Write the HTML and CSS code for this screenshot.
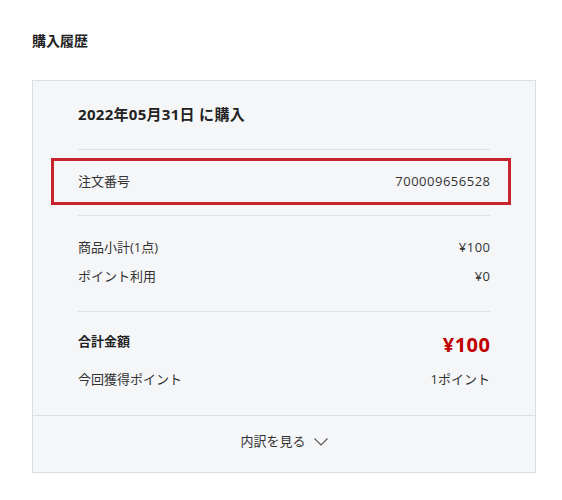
FILE: index.html
```html
<!DOCTYPE html>
<html lang="ja">
<head>
<meta charset="utf-8">
<link rel="stylesheet" href="styles.css">
</head>
<body>
<div class="page">
  <h1 class="title">購入履歴</h1>
  <div class="card">
    <div class="card-body">
      <div class="date">2022年05月31日 に購入</div>
      <div class="divider"></div>
      <div class="row order">
        <span>注文番号</span>
        <span class="val">700009656528</span>
      </div>
      <div class="divider divider-2"></div>
      <div class="rows">
        <div class="row line"><span>商品小計(1点)</span><span class="val">¥100</span></div>
        <div class="row line"><span>ポイント利用</span><span class="val">¥0</span></div>
      </div>
      <div class="divider"></div>
      <div class="totals">
        <div class="row total">
          <span class="total-label">合計金額</span>
          <span class="total-amount">¥100</span>
        </div>
        <div class="row points"><span>今回獲得ポイント</span><span>1ポイント</span></div>
      </div>
    </div>
    <div class="card-footer">
      <span>内訳を見る</span>
      <svg class="chev" width="14" height="8" viewBox="0 0 14 8"><path d="M0.5 0.5 L7 7 L13.5 0.5" fill="none" stroke="#555" stroke-width="1.1"/></svg>
    </div>
  </div>
</div>
</body>
</html>
```
FILE: styles.css
```css
* { box-sizing: border-box; }
html, body { margin: 0; padding: 0; background: #fff; }
body {
  font-family: "Open Sans", "Noto Sans CJK JP", sans-serif;
  color: #333;
  font-size: 13px;
}
.page { padding: 31px 26px 0 32px; }
.title {
  margin: 0 0 29px 0;
  font-size: 14px;
  line-height: 20px;
  font-weight: bold;
  color: #222;
}
.card {
  background: #f5f6f8;
  border: 1px solid #dcdddf;
}
.card-body { padding: 0 45px; }
.date {
  padding: 23px 0 25px;
  line-height: 20px;
  font-size: 15px;
  font-weight: bold;
  color: #222;
  letter-spacing: 0.3px;
}
.divider { height: 1px; background: #dfe0e2; }
.row {
  display: flex;
  justify-content: space-between;
}
.val { letter-spacing: 0.5px; margin-right: -0.5px; }
.order {
  margin: 8px -21px 0 -27px;
  padding: 0 18px 2px 24px;
  height: 47px;
  align-items: center;
  border: 3px solid #c8242e;
}
.divider-2 { margin-top: 10px; }
.rows { padding: 17px 0 20px; }
.line { line-height: 29px; }
.totals { padding: 19px 0 26px; }
.total { align-items: flex-start; height: 28px; }
.total-label { line-height: 20px; font-weight: bold; color: #222; }
.total-amount {
  line-height: 28px;
  font-size: 20px;
  font-weight: bold;
  color: #bf0000;
  letter-spacing: 0.5px;
  margin-right: -0.5px;
}
.points { margin-top: 10px; line-height: 20px; }
.card-footer {
  border-top: 1px solid #dcdddf;
  padding: 15px 0 21px;
  line-height: 20px;
  display: flex;
  justify-content: center;
  align-items: center;
  gap: 8px;
  color: #333;
}
.chev { display: block; margin-top: 1px; }
```
